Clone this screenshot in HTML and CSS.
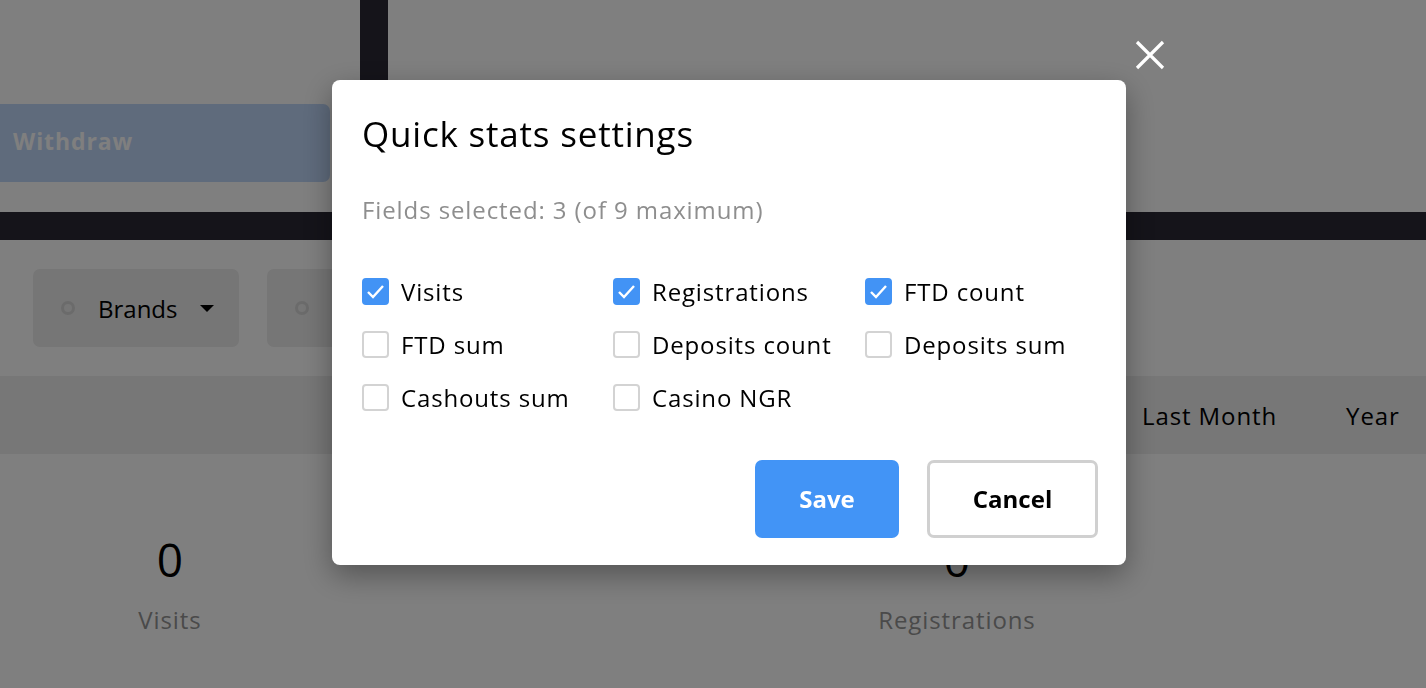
FILE: index.html
```html
<!DOCTYPE html>
<html>
<head>
<meta charset="utf-8">
<link rel="stylesheet" href="styles.css">
</head>
<body>
<div class="page">
  <div class="top">
    <div class="top-left">
      <button class="withdraw">Withdraw</button>
    </div>
    <div class="vbar"></div>
    <div class="top-right"></div>
  </div>
  <div class="hbar"></div>
  <div class="filters">
    <span class="cut">Filters</span>
    <div class="dd"><span class="ring"></span><span class="dd-label">Brands</span><span class="caret"></span></div>
    <div class="dd"><span class="ring"></span><span class="dd-label">Sources</span><span class="caret"></span></div>
  </div>
  <div class="periods">
    <span class="period">Last Month</span>
    <span class="period">Year</span>
  </div>
  <div class="stats">
    <div class="stat"><div class="num">0</div><div class="lbl">Visits</div></div>
    <div class="stat"><div class="num">0</div><div class="lbl">Registrations</div></div>
  </div>
</div>

<div class="overlay">
  <button class="close" aria-label="Close">
    <svg width="30" height="30" viewBox="0 0 30 30"><path d="M2 2 L28 28 M28 2 L2 28" stroke="#fff" stroke-width="3.2" fill="none"/></svg>
  </button>
  <div class="modal">
    <h2 class="title">Quick stats settings</h2>
    <p class="sub">Fields selected: 3 (of 9 maximum)</p>
    <div class="grid">
      <label class="opt"><span class="cb on"><svg viewBox="0 0 27 27"><path d="M6 14 L11 19 L21 8" stroke="#fff" stroke-width="2.4" fill="none"/></svg></span><span class="txt">Visits</span></label>
      <label class="opt"><span class="cb on"><svg viewBox="0 0 27 27"><path d="M6 14 L11 19 L21 8" stroke="#fff" stroke-width="2.4" fill="none"/></svg></span><span class="txt">Registrations</span></label>
      <label class="opt"><span class="cb on"><svg viewBox="0 0 27 27"><path d="M6 14 L11 19 L21 8" stroke="#fff" stroke-width="2.4" fill="none"/></svg></span><span class="txt">FTD count</span></label>
      <label class="opt"><span class="cb"></span><span class="txt">FTD sum</span></label>
      <label class="opt"><span class="cb"></span><span class="txt">Deposits count</span></label>
      <label class="opt"><span class="cb"></span><span class="txt">Deposits sum</span></label>
      <label class="opt"><span class="cb"></span><span class="txt">Cashouts sum</span></label>
      <label class="opt"><span class="cb"></span><span class="txt">Casino NGR</span></label>
    </div>
    <div class="actions">
      <button class="btn save">Save</button>
      <button class="btn cancel">Cancel</button>
    </div>
  </div>
</div>
</body>
</html>
```

FILE: styles.css
```css
* { box-sizing: border-box; }
html, body { margin: 0; padding: 0; }
body {
  width: 1426px;
  height: 688px;
  overflow: hidden;
  background: #fff;
  font-family: "Open Sans", "Noto Sans", sans-serif;
  color: #000;
}
button { font-family: inherit; }

.page { width: 1426px; }

.top { display: flex; height: 212px; }
.top-left { width: 360px; padding-top: 104px; }
.withdraw {
  display: block;
  width: 350px;
  height: 78px;
  margin-left: -20px;
  border: 0;
  border-radius: 7px;
  background: #bed6f8;
  color: #fff;
  font-size: 23px;
  font-weight: 700;
  letter-spacing: 0.9px;
  text-align: left;
  padding: 0 0 4px 33px;
}
.vbar { width: 28px; background: #2a2834; }
.top-right { flex: 1; }
.hbar { height: 28px; background: #2a2834; }

.filters {
  display: flex;
  align-items: center;
  height: 136px;
  gap: 28px;
}
.cut {
  font-size: 24px;
  margin-left: -72px;
  width: 77px;
}
.dd {
  display: flex;
  align-items: center;
  height: 78px;
  width: 206px;
  border-radius: 7px;
  background: #ececec;
  padding-left: 28px;
  font-size: 24px;
}
.ring {
  width: 14px; height: 14px;
  border: 3px solid #d6d6d6;
  border-radius: 50%;
  margin-right: 23px;
}
.dd-label { flex: none; }
.caret {
  margin-left: 22px;
  width: 0; height: 0;
  border-left: 7px solid transparent;
  border-right: 7px solid transparent;
  border-top: 7px solid #000;
}

.periods {
  display: flex;
  align-items: center;
  height: 78px;
  background: #eeeeee;
  font-size: 24px;
  letter-spacing: 0.9px;
  padding-left: 1142px;
  white-space: nowrap;
}
.period { margin-right: 69px; flex: none; }

.stats { display: flex; padding-top: 75px; }
.stat { width: 340px; text-align: center; }
.stat + .stat { margin-left: 447px; }
.num { font-size: 46px; line-height: 60px; }
.lbl { font-size: 24px; letter-spacing: 0.9px; color: #949494; margin-top: 14px; }

.overlay {
  position: fixed;
  inset: 0;
  background: rgba(0,0,0,0.5);
}
.close {
  position: absolute;
  left: 1135px;
  top: 40px;
  width: 30px; height: 30px;
  padding: 0; border: 0; background: none;
}
.close svg { display: block; }

.modal {
  position: absolute;
  left: 332px;
  top: 80px;
  width: 794px;
  height: 485px;
  background: #fff;
  border-radius: 8px;
  box-shadow: 0 10px 30px rgba(0,0,0,0.35);
  padding: 30px 28px 27px 30px;
  display: flex;
  flex-direction: column;
}
.title {
  margin: 0;
  font-size: 35px;
  font-weight: 400;
  line-height: 48px;
  letter-spacing: 0.8px;
}
.sub {
  margin: 37px 0 0;
  font-size: 24px;
  letter-spacing: 0.9px;
  color: #8e8e8e;
  line-height: 30px;
}
.grid {
  display: grid;
  grid-template-columns: 251px 252px 1fr;
  row-gap: 26px;
  margin-top: 53px;
}
.opt {
  display: flex;
  align-items: center;
  height: 27px;
  font-size: 24px;
  letter-spacing: 0.85px;
  gap: 12px;
  white-space: nowrap;
}
.txt { line-height: 27px; }
.cb {
  flex: none;
  width: 27px; height: 27px;
  border: 2px solid #d3d3d3;
  border-radius: 4px;
  background: #fff;
}
.cb.on { background: #4293f5; border-color: #4293f5; }
.cb svg { display: block; width: 27px; height: 27px; margin: -2px; }

.actions {
  margin-top: auto;
  display: flex;
  justify-content: flex-end;
  gap: 28px;
}
.btn {
  height: 78px;
  border-radius: 7px;
  font-size: 24px;
  font-weight: 700;
  padding-bottom: 3px;
}
.save { width: 144px; border: 0; background: #4294f6; color: #fff; }
.cancel { width: 171px; border: 3px solid #d0d0d0; background: #fff; color: #000; }
```
